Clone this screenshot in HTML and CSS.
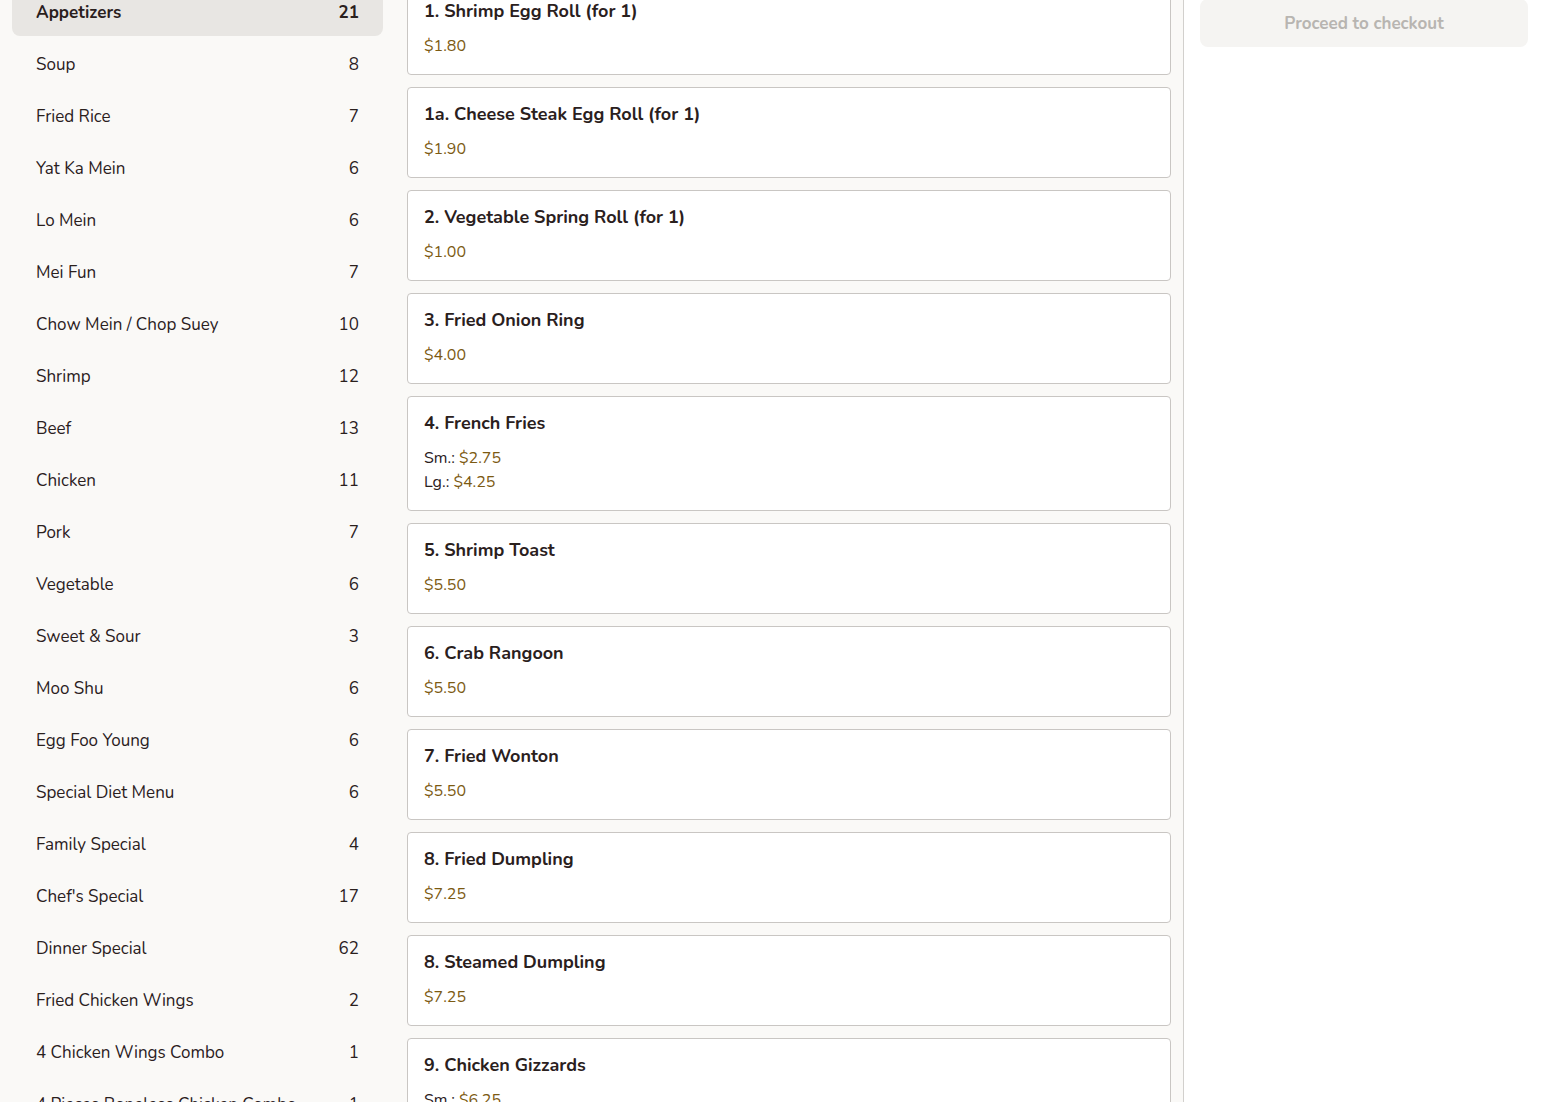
FILE: index.html
```html
<!DOCTYPE html>
<html lang="en">
<head>
<meta charset="utf-8">
<title>Menu</title>
<link rel="stylesheet" href="styles.css">
</head>
<body>
<div class="page">
  <aside class="sidebar">
    <ul class="cats">
      <li class="cat active"><span>Appetizers</span><span>21</span></li>
      <li class="cat"><span>Soup</span><span>8</span></li>
      <li class="cat"><span>Fried Rice</span><span>7</span></li>
      <li class="cat"><span>Yat Ka Mein</span><span>6</span></li>
      <li class="cat"><span>Lo Mein</span><span>6</span></li>
      <li class="cat"><span>Mei Fun</span><span>7</span></li>
      <li class="cat"><span>Chow Mein / Chop Suey</span><span>10</span></li>
      <li class="cat"><span>Shrimp</span><span>12</span></li>
      <li class="cat"><span>Beef</span><span>13</span></li>
      <li class="cat"><span>Chicken</span><span>11</span></li>
      <li class="cat"><span>Pork</span><span>7</span></li>
      <li class="cat"><span>Vegetable</span><span>6</span></li>
      <li class="cat"><span>Sweet &amp; Sour</span><span>3</span></li>
      <li class="cat"><span>Moo Shu</span><span>6</span></li>
      <li class="cat"><span>Egg Foo Young</span><span>6</span></li>
      <li class="cat"><span>Special Diet Menu</span><span>6</span></li>
      <li class="cat"><span>Family Special</span><span>4</span></li>
      <li class="cat"><span>Chef's Special</span><span>17</span></li>
      <li class="cat"><span>Dinner Special</span><span>62</span></li>
      <li class="cat"><span>Fried Chicken Wings</span><span>2</span></li>
      <li class="cat"><span>4 Chicken Wings Combo</span><span>1</span></li>
      <li class="cat"><span>4 Pieces Boneless Chicken Combo</span><span>1</span></li>
    </ul>
  </aside>
  <main class="menu">
    <div class="card"><h3>1. Shrimp Egg Roll (for 1)</h3><div class="prices"><div class="price">$1.80</div></div></div>
    <div class="card"><h3>1a. Cheese Steak Egg Roll (for 1)</h3><div class="prices"><div class="price">$1.90</div></div></div>
    <div class="card"><h3>2. Vegetable Spring Roll (for 1)</h3><div class="prices"><div class="price">$1.00</div></div></div>
    <div class="card"><h3>3. Fried Onion Ring</h3><div class="prices"><div class="price">$4.00</div></div></div>
    <div class="card"><h3>4. French Fries</h3><div class="prices"><div>Sm.: <span class="price">$2.75</span></div><div>Lg.: <span class="price">$4.25</span></div></div></div>
    <div class="card"><h3>5. Shrimp Toast</h3><div class="prices"><div class="price">$5.50</div></div></div>
    <div class="card"><h3>6. Crab Rangoon</h3><div class="prices"><div class="price">$5.50</div></div></div>
    <div class="card"><h3>7. Fried Wonton</h3><div class="prices"><div class="price">$5.50</div></div></div>
    <div class="card"><h3>8. Fried Dumpling</h3><div class="prices"><div class="price">$7.25</div></div></div>
    <div class="card"><h3>8. Steamed Dumpling</h3><div class="prices"><div class="price">$7.25</div></div></div>
    <div class="card"><h3>9. Chicken Gizzards</h3><div class="prices"><div>Sm.: <span class="price">$6.25</span></div><div>Lg.: <span class="price">$9.50</span></div></div></div>
  </main>
  <aside class="cart">
    <button class="checkout" disabled>Proceed to checkout</button>
  </aside>
</div>
</body>
</html>
```
FILE: styles.css
```css
html, body {
  margin: 0;
  padding: 0;
  height: 100%;
  overflow: hidden;
}
body {
  font-family: "Nunito", "Open Sans", "Noto Sans", sans-serif;
  color: #2a201d;
  background: #faf9f7;
  font-size: 16px;
}
.page {
  display: grid;
  grid-template-columns: 395px 1fr 360px;
  height: 1102px;
}
.sidebar {
  padding: 0 12px;
  overflow: hidden;
}
.cats {
  list-style: none;
  margin: -12px 0 0;
  padding: 0;
  display: flex;
  flex-direction: column;
  gap: 4px;
}
.cat {
  height: 48px;
  display: flex;
  align-items: center;
  justify-content: space-between;
  padding: 0 24px;
  border-radius: 8px;
  font-size: 17px;
  white-space: nowrap;
}
.cat.active {
  background: #e8e6e3;
  font-weight: 700;
}
.menu {
  padding: 0 12px;
  border-right: 1px solid #d2d0cd;
  overflow: hidden;
  display: flex;
  flex-direction: column;
  gap: 12px;
}
.card {
  flex: none;
  background: #fff;
  border: 1px solid #c9c6c3;
  border-radius: 4px;
  padding: 14px 16px 16px;
}
.card:first-child {
  margin-top: -16px;
}
.card h3 {
  margin: 0;
  font-size: 18px;
  line-height: 24px;
  font-weight: 700;
}
.prices {
  margin-top: 11px;
  font-size: 16px;
  line-height: 24px;
}
.price {
  color: #7c5a12;
}
.cart {
  background: #fff;
  padding: 0 16px;
}
.checkout {
  display: block;
  width: 100%;
  height: 48px;
  margin-top: -1px;
  border: none;
  border-radius: 8px;
  background: #f5f4f2;
  color: #b8b5b1;
  font-family: inherit;
  font-size: 17px;
  font-weight: 700;
}
```
